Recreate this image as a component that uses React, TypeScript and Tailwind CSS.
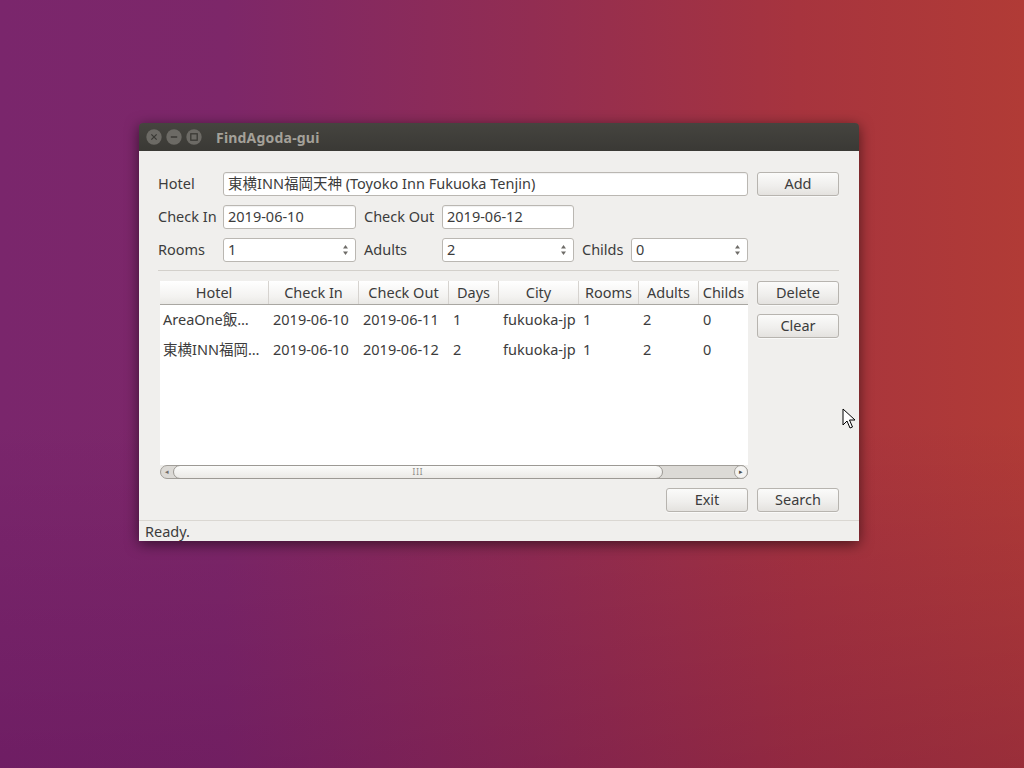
const font = "font-['Noto_Sans','Noto_Sans_CJK_JP',sans-serif]";

function Field({ value, w }: { value: string; w: string }) {
  return (
    <div className={`${w} h-6 bg-white border border-[#bab7b2] rounded-[3px] flex items-center pl-[4px] text-[14.5px] text-[#3c3c3c] shadow-[inset_0_1px_1px_rgba(0,0,0,0.06)]`}>
      {value}
    </div>
  );
}

function Spin({ value, w }: { value: string; w: string }) {
  return (
    <div className={`${w} h-6 bg-white border border-[#bab7b2] rounded-[3px] flex items-center justify-between pl-[4px] pr-[6px] text-[14.5px] text-[#3c3c3c]`}>
      <span>{value}</span>
      <svg width="7" height="14" viewBox="0 0 7 14">
        <path d="M3.5 2 L6 5.5 L1 5.5 Z" fill="#6e6c68" />
        <path d="M3.5 12 L6 8.5 L1 8.5 Z" fill="#6e6c68" />
      </svg>
    </div>
  );
}

function Btn({ label }: { label: string }) {
  return (
    <div className="w-[82px] h-6 rounded-[3px] border border-[#b7b4af] bg-[linear-gradient(#fbfbfa,#efeeec_60%,#e4e2df)] flex items-center justify-center text-[14.5px] text-[#3c3c3c] shadow-[0_1px_0_rgba(255,255,255,0.6)]">
      {label}
    </div>
  );
}

const cols = [
  { name: 'Hotel', w: 'w-[109px]' },
  { name: 'Check In', w: 'w-[90px]' },
  { name: 'Check Out', w: 'w-[90px]' },
  { name: 'Days', w: 'w-[50px]' },
  { name: 'City', w: 'w-[80px]' },
  { name: 'Rooms', w: 'w-[60px]' },
  { name: 'Adults', w: 'w-[60px]' },
  { name: 'Childs', w: 'w-[49px]' },
];

const rows = [
  ['AreaOne飯…', '2019-06-10', '2019-06-11', '1', 'fukuoka-jp', '1', '2', '0'],
  ['東横INN福岡…', '2019-06-10', '2019-06-12', '2', 'fukuoka-jp', '1', '2', '0'],
];

function Table() {
  return (
    <div className="ml-[2px] w-[588px] h-[198px] flex flex-col bg-white">
      <div className="h-6 flex border-b border-[#a9a7a2] bg-[linear-gradient(#ffffff,#f3f2f0_70%,#e9e8e5)]">
        {cols.map((c, i) => (
          <div
            key={c.name}
            className={`${c.w} shrink-0 flex items-center justify-center whitespace-nowrap overflow-hidden ${i < cols.length - 1 ? 'border-r border-[#d6d3cf]' : ''}`}
          >
            {c.name}
          </div>
        ))}
      </div>
      <div className="flex-1">
        {rows.map((r, ri) => (
          <div key={ri} className="h-[30px] flex items-center">
            {r.map((v, i) => (
              <div key={i} className={`${cols[i].w} shrink-0 whitespace-nowrap overflow-hidden ${i === 0 ? 'pl-[3px]' : 'pl-[4px]'}`}>
                {v}
              </div>
            ))}
          </div>
        ))}
      </div>
      <div className="h-[14px] flex items-center bg-[#f0efed] relative">
        <div className="absolute inset-0 rounded-full border border-[#a19e99] bg-[#dcdad6]" />
        <div className="absolute left-0 top-0 h-[14px] w-[14px] flex items-center justify-center text-[7px] text-[#6f6d69]">◂</div>
        <div className="absolute left-[13px] top-0 h-[14px] w-[490px] rounded-full border border-[#9c9994] bg-[linear-gradient(#fbfbfa,#ebe9e6)] flex items-center justify-center">
          <span className="text-[8px] leading-none text-[#8c8a85] tracking-[1px]">III</span>
        </div>
        <div className="absolute right-0 top-0 h-[14px] w-[14px] rounded-full border border-[#a19e99] bg-[#f4f3f1] flex items-center justify-center text-[7px] text-[#4d4b48]">▸</div>
      </div>
    </div>
  );
}

function Cursor() {
  return (
    <svg className="absolute left-[842px] top-[408px]" width="14" height="22" viewBox="0 0 14 22">
      <path d="M1 1 L1 17 L5 13 L8 20 L10.5 19 L7.5 12 L13 12 Z" fill="#fff" stroke="#000" strokeWidth="1" strokeLinejoin="round" />
    </svg>
  );
}

function TitleButtons() {
  const glyphs = [
    <path key="x" d="M5 5 L10 10 M10 5 L5 10" />,
    <path key="m" d="M4.5 7.5 L10.5 7.5" />,
    <rect key="r" x="4.5" y="4.5" width="6" height="6" />,
  ];
  return (
    <div className="flex gap-[4px]">
      {glyphs.map((g, i) => (
        <svg key={i} width="16" height="16" viewBox="0 0 15 15">
          <circle cx="7.5" cy="7.5" r="7.2" fill="#6c6a65" />
          <g stroke="#3a3935" strokeWidth="1.2" fill="none">{g}</g>
        </svg>
      ))}
    </div>
  );
}

export default function App() {
  return (
    <div className={`${font} relative w-[1024px] h-[768px] overflow-hidden bg-[linear-gradient(to_top,rgba(70,0,70,0.22),transparent_45%),linear-gradient(90deg,#7a266c_0%,#7d2769_22%,#922d52_52%,#a7343e_78%,#b13b36_100%)] pt-[123px] pl-[139px]`}>
      <div className="w-[720px] h-[418px] flex flex-col shadow-[0_3px_14px_rgba(0,0,0,0.55)] rounded-t-[4px] overflow-hidden">
        <div className="h-[28px] shrink-0 bg-[linear-gradient(#45443f,#3a3935)] flex items-center pl-[7px]">
          <TitleButtons />
          <span className="ml-[14px] text-[14px] font-bold text-[#a4a199] tracking-[0.2px]">FindAgoda-gui</span>
        </div>
        <div className="flex-1 bg-[#f0efed] flex flex-col text-[14.5px] text-[#3c3c3c]">
          <div className="pt-[21px] pl-[19px] pr-[20px] flex flex-col">
            <div className="flex items-center h-6">
              <div className="w-[65px]">Hotel</div>
              <Field value="東横INN福岡天神 (Toyoko Inn Fukuoka Tenjin)" w="w-[525px]" />
              <div className="ml-[9px]">
                <Btn label="Add" />
              </div>
            </div>
            <div className="flex items-center h-6 mt-[9px]">
              <div className="w-[65px]">Check In</div>
              <Field value="2019-06-10" w="w-[133px]" />
              <div className="w-[86px] pl-[8px]">Check Out</div>
              <Field value="2019-06-12" w="w-[132px]" />
            </div>
            <div className="flex items-center h-6 mt-[9px]">
              <div className="w-[65px]">Rooms</div>
              <Spin value="1" w="w-[133px]" />
              <div className="w-[86px] pl-[8px]">Adults</div>
              <Spin value="2" w="w-[132px]" />
              <div className="w-[57px] pl-[8px]">Childs</div>
              <Spin value="0" w="w-[117px]" />
            </div>
            <div className="mt-[8px] h-px bg-[#d3d0cb]" />
            <div className="mt-[10px] flex">
              <Table />
              <div className="ml-[9px] flex flex-col gap-[9px]">
                <Btn label="Delete" />
                <Btn label="Clear" />
              </div>
            </div>
            <div className="mt-[9px] flex justify-end gap-[9px]">
              <Btn label="Exit" />
              <Btn label="Search" />
            </div>
          </div>
          <div className="mt-[8px] h-px bg-[#dad7d2]" />
          <div className="flex-1 flex items-center pl-[6px]">Ready.</div>
        </div>
      </div>
      <Cursor />
    </div>
  );
}
